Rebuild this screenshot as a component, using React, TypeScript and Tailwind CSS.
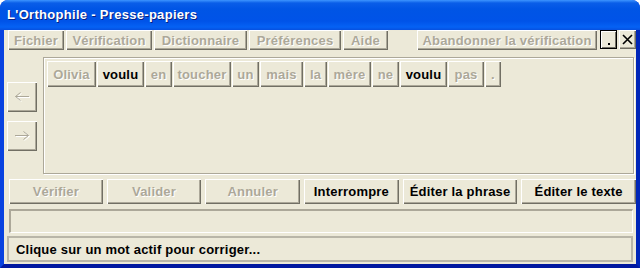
const raised =
	'bg-[#ece9d8] shadow-[inset_1px_1px_0_#fff,inset_-1px_-1px_0_#716f64,inset_-2px_-2px_0_#aca899]'
const off = 'text-[#aca899] [text-shadow:1px_1px_0_#fff]'
const font = { fontFamily: '"Liberation Sans", Arial, sans-serif' }

const menu: [string, number][] = [
	['Fichier', 56],
	['Vérification', 86],
	['Dictionnaire', 93],
	['Préférences', 92],
	['Aide', 45],
]

const words: [string, number, boolean][] = [
	['Olivia', 49, false],
	['voulu', 47, true],
	['en', 27, false],
	['toucher', 58, false],
	['un', 27, false],
	['mais', 43, false],
	['la', 23, false],
	['mère', 43, false],
	['ne', 27, false],
	['voulu', 47, true],
	['pas', 36, false],
	['.', 16, false],
]

const actions: [string, number, boolean][] = [
	['Vérifier', 94, false],
	['Valider', 95, false],
	['Annuler', 95, false],
	['Interrompre', 95, true],
	['Éditer la phrase', 115, true],
	['Éditer le texte', 115, true],
]

const Arrow = ({ dir }: { dir: 'left' | 'right' }) => {
	const d = dir === 'left' ? 'M6.5 1.5 L1.5 5.5 L6.5 9.5 M1.5 5.5 H15' : 'M9.5 1.5 L14.5 5.5 L9.5 9.5 M1 5.5 H14.5'
	return (
		<svg width="17" height="12" viewBox="0 0 17 12">
			<path d={d} transform="translate(1 1)" fill="none" stroke="#fff" strokeWidth={1} />
			<path d={d} fill="none" stroke="#aca899" strokeWidth={1} />
		</svg>
	)
}

export default function App() {
	return (
		<div
			className="w-[640px] h-[268px] flex flex-col bg-[#0831d9] rounded-t-[8px] overflow-hidden text-[13px] font-bold leading-none whitespace-nowrap tracking-[0.2px]"
			style={font}
		>
			{/* Title bar */}
			<div className="h-[30px] flex items-center pl-[7px] pb-[1px] bg-[linear-gradient(to_bottom,#3d95ff_0%,#0a5ee8_10%,#0055e5_30%,#0053e8_70%,#0562f4_90%,#0650e0_100%)]">
				<span className="text-white text-[13px] tracking-[0.3px] [text-shadow:1px_1px_0_#0a1f80]">
					L'Orthophile - Presse-papiers
				</span>
			</div>

			{/* Body */}
			<div className="flex-1 flex flex-col bg-[#ece9d8] border-l-4 border-l-[#0842e0] border-r-4 border-r-[#0026b8] border-b-4 border-b-[#0018a0]">
				{/* Menu row */}
				<div className="h-[20px] flex pl-[4px] gap-[2px]">
					{menu.map(([label, w]) => (
						<div key={label} className={`${raised} ${off} h-full flex items-center justify-center`} style={{ width: w }}>
							{label}
						</div>
					))}
					<div className="flex-1" />
					<div className={`${raised} ${off} w-[180px] h-full flex items-center justify-center`}>
						Abandonner la vérification
					</div>
					<div className="w-[17px] h-[19px] ml-[1px] bg-[#ece9d8] border border-black shadow-[inset_1px_1px_0_#fff,inset_-1px_-1px_0_#716f64] flex items-end justify-center pb-[3px]">
						<div className="w-[2px] h-[2px] bg-black" />
					</div>
					<div className={`${raised} w-[17px] h-[19px] flex items-center justify-center`}>
						<svg width="11" height="11" viewBox="0 0 11 11">
							<path d="M1 1 L10 10 M10 1 L1 10" stroke="#000" strokeWidth={1.6} />
						</svg>
					</div>
				</div>

				{/* Middle */}
				<div className="mt-[7px] h-[117px] flex">
					<div className="w-[39px] pl-[3px] pt-[25px] flex flex-col gap-[9px]">
						<div className={`${raised} w-[30px] h-[30px] flex items-center justify-center`}>
							<Arrow dir="left" />
						</div>
						<div className={`${raised} w-[30px] h-[30px] flex items-center justify-center`}>
							<Arrow dir="right" />
						</div>
					</div>
					<div className="w-[591px] h-full border border-[#aca899] shadow-[inset_1px_1px_0_#fff,1px_1px_0_#fff] pl-[3px] pt-[3px]">
						<div className="flex gap-[1px] h-[26px]">
							{words.map(([w, width, on], i) => (
								<div
									key={i}
									className={`${raised} ${on ? 'text-black' : off} h-full flex items-center justify-center`}
									style={{ width }}
								>
									{w}
								</div>
							))}
						</div>
					</div>
				</div>

				{/* Action buttons */}
				<div className="mt-[5px] h-[25px] flex pl-[5px] gap-[4px]">
					{actions.map(([label, w, on]) => (
						<div
							key={label}
							className={`${raised} ${on ? 'text-black' : off} h-full flex items-center justify-center`}
							style={{ width: w }}
						>
							{label}
						</div>
					))}
				</div>

				{/* Input field */}
				<div className="mt-[5px] ml-[5px] w-[624px] h-[24px] border-t-2 border-l-2 border-[#aca899] border-b border-r border-b-white border-r-white" />

				{/* Status */}
				<div className="mt-[3px] ml-[3px] w-[626px] h-[26px] border-2 border-[#b9b6a8] flex items-center pl-[7px] text-black">
					Clique sur un mot actif pour corriger...
				</div>
			</div>
		</div>
	)
}
